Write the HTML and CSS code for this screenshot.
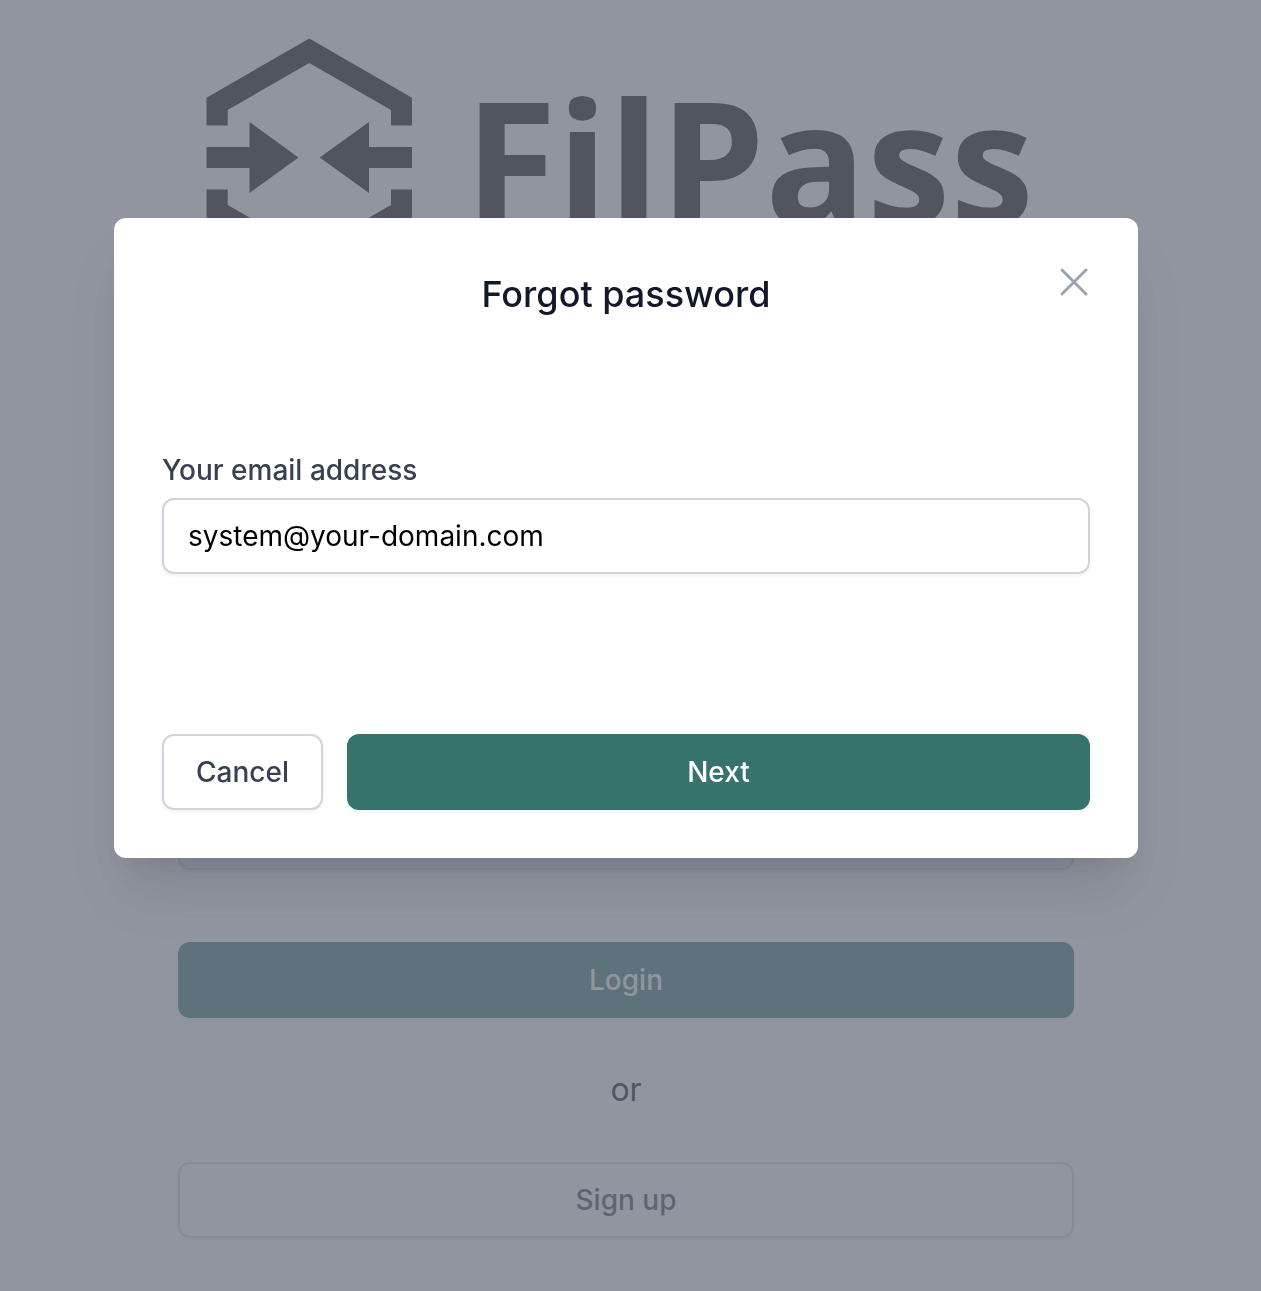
FILE: index.html
```html
<!DOCTYPE html>
<html lang="en">
<head>
<meta charset="utf-8">
<title>FilPass</title>
<link rel="stylesheet" href="styles.css">
</head>
<body>
<main class="page">
  <svg class="logo" viewBox="0 0 896 240" role="img" aria-label="FilPass">
    <path d="M28.500 59.700 131.300 .5 234 59.700V87.500H213V72L131.300 25 49.700 72V87.500H28.500Z"/>
    <path d="M28.500 151.500H49.700V167L131.300 214 213 167V151.500H234V179.300L131.300 238.500 28.500 179.300Z"/>
    <path d="M28.500 109H71.500V84L120.500 119.500 71.500 155V130H28.500Z"/>
    <path d="M234 109H191V84L141.700 119.500 191 155V130H234Z"/>
    <text class="logo-text" x="286.500" y="185.700">FilPass</text>
  </svg>
  <form class="login">
    <input class="field field-filled" type="password" aria-label="Password">
    <button class="btn btn-primary btn-login" type="button">Login</button>
    <p class="divider">or</p>
    <button class="btn btn-outline" type="button">Sign up</button>
  </form>
</main>
<div class="overlay">
  <section class="modal" role="dialog" aria-modal="true">
    <h2 class="modal-title">Forgot password</h2>
    <button class="close" type="button" aria-label="Close">
      <svg viewBox="0 0 24 24" width="48" height="48"><path d="M6 18 18 6M6 6l12 12"/></svg>
    </button>
    <label class="label" for="email">Your email address</label>
    <input class="field" id="email" type="text" value="system@your-domain.com">
    <div class="actions">
      <button class="btn btn-outline btn-cancel" type="button">Cancel</button>
      <button class="btn btn-primary btn-next" type="button">Next</button>
    </div>
  </section>
</div>
</body>
</html>
```
FILE: styles.css
```css
* { box-sizing: border-box; }
body {
  margin: 0;
  height: 1291px;
  overflow: hidden;
  background: #fff;
  color: #000;
  font-family: Inter, "Liberation Sans", sans-serif;
}
button, input { font: inherit; margin: 0; }
.page {
  width: 1252px;
  padding: 38px 178px 0;
}
.logo { display: block; width: 896px; height: 240px; }
.logo-text {
  font-family: "Open Sans", "Noto Sans", sans-serif;
  font-size: 168.2px;
  font-weight: 700;
}
.login {
  display: flex;
  flex-direction: column;
  padding-top: 516px;
}
.field {
  display: block;
  width: 100%;
  height: 76px;
  padding: 0 24px;
  border: 2px solid #d1d5db;
  border-radius: 12px;
  background: #fff;
  color: #000;
  font-size: 28px;
  box-shadow: 0 2px 4px rgba(0, 0, 0, .05);
  outline: none;
}
.field-filled { background: #e8f0fe; }
.btn {
  height: 76px;
  padding: 0 32px;
  border: 2px solid transparent;
  border-radius: 12px;
  font-size: 28px;
  font-weight: 500;
  line-height: 40px;
  box-shadow: 0 2px 4px rgba(0, 0, 0, .05);
}
.btn-primary { background: #35736c; border-color: #35736c; color: #fff; }
.btn-outline { background: #fff; border-color: #d1d5db; color: #374151; }
.btn-login { margin-top: 72px; }
.divider {
  margin: 48px 0;
  font-size: 32px;
  line-height: 48px;
  text-align: center;
}
.overlay {
  position: fixed;
  inset: 0;
  display: flex;
  justify-content: center;
  align-items: flex-start;
  padding: 218px 9px 0 0;
  background: rgba(107, 114, 128, .75);
}
.modal {
  position: relative;
  width: 1024px;
  height: 640px;
  padding: 48px;
  border-radius: 12px;
  background: #fff;
  box-shadow: 0 40px 60px -10px rgba(0, 0, 0, .1), 0 18px 20px -10px rgba(0, 0, 0, .06);
}
.modal-title {
  margin: 0;
  color: #111827;
  font-size: 36px;
  font-weight: 500;
  line-height: 56px;
  text-align: center;
}
.close {
  position: absolute;
  top: 40px;
  right: 40px;
  display: block;
  width: 48px;
  height: 48px;
  padding: 0;
  border: 0;
  background: none;
}
.close svg {
  display: block;
  fill: none;
  stroke: #9ca3af;
  stroke-width: 1.5;
  stroke-linecap: round;
}
.label {
  display: block;
  margin: 128px 0 8px;
  color: #374151;
  font-size: 28px;
  font-weight: 500;
  line-height: 40px;
}
.actions { display: flex; gap: 24px; margin-top: 160px; }
.btn-next { flex: 1; }
```
